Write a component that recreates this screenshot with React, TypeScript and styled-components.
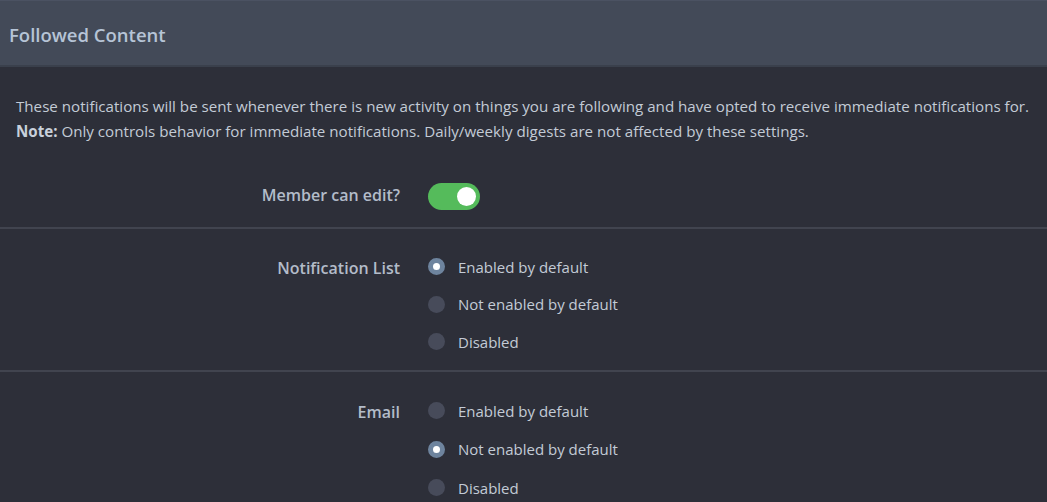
import React, { useState } from 'react';
import styled, { createGlobalStyle } from 'styled-components';

const GlobalStyle = createGlobalStyle`
  html, body {
    margin: 0;
    padding: 0;
    background: #2d2f39;
  }
  body {
    font-family: "Open Sans", "Noto Sans", sans-serif;
    color: #c3cbd6;
  }
`;

const Page = styled.div`
  width: 1047px;
  min-height: 502px;
  background: #2d2f39;
  overflow: hidden;
`;

const Header = styled.div`
  height: 67px;
  box-sizing: border-box;
  display: flex;
  align-items: center;
  padding: 2px 9px 0;
  background: #434a58;
  border-top: 1px solid #4b5262;
  border-bottom: 2px solid #3a404c;
`;

const Title = styled.h2`
  margin: 0;
  font-size: 18.5px;
  font-weight: 600;
  color: #b6c4d6;
`;

const Intro = styled.div`
  padding: 27px 16px 0;
  font-size: 15.15px;
  line-height: 25px;
  color: #c3cbd6;

  b {
    font-weight: 700;
    color: #c9d1dc;
  }
`;

const Row = styled.div<{ $pad: string; $divider?: boolean }>`
  display: grid;
  grid-template-columns: 400px 1fr;
  column-gap: 28px;
  padding: ${({ $pad }) => $pad};
  border-bottom: ${({ $divider }) => ($divider ? '2px solid #41444f' : 'none')};
`;

const Label = styled.div<{ $pad?: number }>`
  text-align: right;
  font-size: 16px;
  font-weight: 600;
  color: #b3bcc9;
  line-height: 25px;
  padding-top: ${({ $pad }) => $pad ?? 0}px;
`;

const Options = styled.div`
  display: flex;
  flex-direction: column;
`;

const Option = styled.label<{ $h: number }>`
  display: flex;
  align-items: center;
  height: ${({ $h }) => $h}px;
  font-size: 15px;
  color: #c3cbd6;
  cursor: pointer;
`;

const Radio = styled.span<{ $checked: boolean }>`
  width: 17px;
  height: 17px;
  border-radius: 50%;
  margin-right: 13px;
  box-sizing: border-box;
  background: ${({ $checked }) => ($checked ? '#fff' : '#474b5a')};
  border: ${({ $checked }) => ($checked ? '5px solid #6e849e' : 'none')};
  flex-shrink: 0;
`;

const Toggle = styled.button<{ $on: boolean }>`
  position: relative;
  width: 52px;
  height: 27px;
  border: none;
  padding: 0;
  border-radius: 14px;
  background: ${({ $on }) => ($on ? '#55bb5b' : '#474b5a')};
  cursor: pointer;

  &::after {
    content: '';
    position: absolute;
    top: 4px;
    left: ${({ $on }) => ($on ? '29px' : '4px')};
    width: 19px;
    height: 19px;
    border-radius: 50%;
    background: #fff;
  }
`;

const ToggleCell = styled.div`
  display: flex;
  align-items: center;
`;

const choices = ['Enabled by default', 'Not enabled by default', 'Disabled'];

const RadioGroup: React.FC<{ value: number; onChange: (i: number) => void; spacing?: number }> = ({
  value,
  onChange,
  spacing = 37.5,
}) => (
  <Options>
    {choices.map((c, i) => (
      <Option key={c} $h={spacing} onClick={() => onChange(i)}>
        <Radio $checked={value === i} />
        {c}
      </Option>
    ))}
  </Options>
);

const App: React.FC = () => {
  const [canEdit, setCanEdit] = useState(true);
  const [list, setList] = useState(0);
  const [email, setEmail] = useState(1);

  return (
    <Page>
      <GlobalStyle />
      <Header>
        <Title>Followed Content</Title>
      </Header>
      <Intro>
        These notifications will be sent whenever there is new activity on things you are following and have opted to receive immediate notifications for.
        <br />
        <b>Note:</b> Only controls behavior for immediate notifications. Daily/weekly digests are not affected by these settings.
      </Intro>
      <Row $pad="39px 0 17px" $divider>
        <Label>Member can edit?</Label>
        <ToggleCell>
          <Toggle $on={canEdit} onClick={() => setCanEdit(!canEdit)} />
        </ToggleCell>
      </Row>
      <Row $pad="19px 0 9px" $divider>
        <Label $pad={8}>Notification List</Label>
        <RadioGroup value={list} onChange={setList} />
      </Row>
      <Row $pad="20px 0 10px">
        <Label $pad={8}>Email</Label>
        <RadioGroup value={email} onChange={setEmail} spacing={38.5} />
      </Row>
    </Page>
  );
};

export default App;
